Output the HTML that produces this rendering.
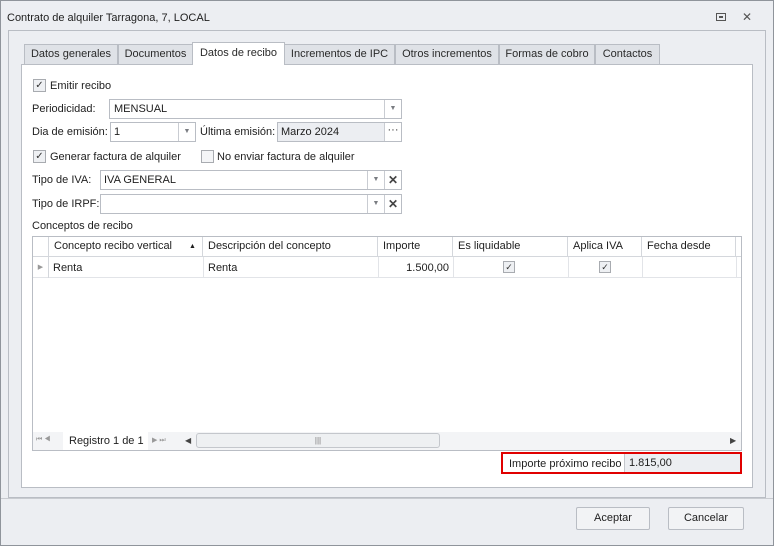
<!DOCTYPE html><html><head><style>
*{box-sizing:border-box;margin:0;padding:0}
body{width:774px;height:546px;background:#eceef2;font-family:"Liberation Sans",sans-serif;font-size:11px;color:#1e1e1e;position:relative;overflow:hidden}
.a{position:absolute}
.box{position:absolute;background:#fff;border:1px solid #b9bdc4}
.ro{background:#eceef2}
.btn{position:absolute;border-left:1px solid #c9ccd2;width:17px;top:0;bottom:0;background:#fff;text-align:center;color:#7a7d82;font-size:7px;line-height:18px}
.tab{position:absolute;top:44px;height:20px;background:#dfe2e7;border:1px solid #b9bdc4;border-bottom:none;line-height:19px;text-align:center;color:#2a2a2a}
.cb{position:absolute;width:13px;height:13px;border:1px solid #a8abb0;background:#eef0f3;font-size:10px;line-height:11px;text-align:center;color:#333}
.gh{position:absolute;top:0;height:20px;border-right:1px solid #d4d7dc;line-height:19px;padding-left:5px;white-space:nowrap}
.lbl{position:absolute;white-space:nowrap}
</style></head><body>
<div class="a" style="left:0;top:0;width:774px;height:546px;border:1px solid #8f949b"></div>
<div class="a" style="left:7px;top:12px">Contrato de alquiler Tarragona, 7, LOCAL</div>
<div class="a" style="left:716px;top:13px;width:10px;height:8px;border:1px solid #555"><div style="margin:2px 2px;height:2px;border:1px solid #555;width:4px"></div></div>
<div class="a" style="left:742px;top:10px;font-size:12px;color:#555">✕</div>
<div class="a" style="left:8px;top:30px;width:758px;height:468px;border:1px solid #b9bdc4"></div>
<div class="tab" style="left:24px;width:94px">Datos generales</div>
<div class="tab" style="left:118px;width:75px">Documentos</div>
<div class="tab" style="left:284px;width:111px">Incrementos de IPC</div>
<div class="tab" style="left:395px;width:104px">Otros incrementos</div>
<div class="tab" style="left:499px;width:96px">Formas de cobro</div>
<div class="tab" style="left:595px;width:65px">Contactos</div>
<div class="a" style="left:21px;top:64px;width:732px;height:424px;background:#fff;border:1px solid #b9bdc4"></div>
<div class="tab" style="left:192px;width:93px;top:42px;height:23px;background:#fff;line-height:21px;z-index:2">Datos de recibo</div>
<div class="cb" style="left:33px;top:79px">✓</div><div class="lbl" style="left:50px;top:80px">Emitir recibo</div>
<div class="lbl" style="left:32px;top:103px">Periodicidad:</div>
<div class="box" style="left:109px;top:99px;width:293px;height:20px"><span class="a" style="left:4px;top:3px">MENSUAL</span><div class="btn" style="right:0">▼</div></div>
<div class="lbl" style="left:32px;top:126px">Dia de emisión:</div>
<div class="box" style="left:110px;top:122px;width:86px;height:20px"><span class="a" style="left:3px;top:3px">1</span><div class="btn" style="right:0">▼</div></div>
<div class="lbl" style="left:200px;top:126px">Última emisión:</div>
<div class="box ro" style="left:277px;top:122px;width:125px;height:20px"><span class="a" style="left:3px;top:3px">Marzo 2024</span><div class="btn" style="right:0;font-size:11px;line-height:14px;color:#333">···</div></div>
<div class="cb" style="left:33px;top:150px">✓</div><div class="lbl" style="left:50px;top:151px">Generar factura de alquiler</div>
<div class="cb" style="left:201px;top:150px;background:#f4f5f7"></div><div class="lbl" style="left:217px;top:151px">No enviar factura de alquiler</div>
<div class="lbl" style="left:32px;top:174px">Tipo de IVA:</div>
<div class="box" style="left:100px;top:170px;width:302px;height:20px"><span class="a" style="left:3px;top:3px">IVA GENERAL</span><div class="btn" style="right:17px">▼</div><div class="btn" style="right:0;font-size:12px;color:#444;font-weight:bold">✕</div></div>
<div class="lbl" style="left:32px;top:198px">Tipo de IRPF:</div>
<div class="box" style="left:100px;top:194px;width:302px;height:20px"><div class="btn" style="right:17px">▼</div><div class="btn" style="right:0;font-size:12px;color:#444;font-weight:bold">✕</div></div>
<div class="lbl" style="left:32px;top:220px">Conceptos de recibo</div>
<div class="box" style="left:32px;top:236px;width:710px;height:215px;overflow:hidden">
 <div class="a" style="left:0;top:0;width:710px;height:20px;border-bottom:1px solid #d4d7dc;background:#fff"></div>
 <div class="gh" style="left:0;width:16px"></div>
 <div class="gh" style="left:16px;width:154px">Concepto recibo vertical<span class="a" style="left:140px;font-size:7px">▲</span></div>
 <div class="gh" style="left:170px;width:175px">Descripción del concepto</div>
 <div class="gh" style="left:345px;width:75px">Importe</div>
 <div class="gh" style="left:420px;width:115px">Es liquidable</div>
 <div class="gh" style="left:535px;width:74px">Aplica IVA</div>
 <div class="gh" style="left:609px;width:94px">Fecha desde</div>
 <div class="a" style="left:0;top:20px;width:710px;height:21px;border-bottom:1px solid #e2e4e8"></div>
 <div class="a" style="left:0;top:20px;width:16px;height:21px;border-right:1px solid #d4d7dc;color:#999;font-size:7px;line-height:21px;text-align:center">▶</div>
 <div class="a" style="left:170px;top:20px;height:21px;border-left:1px solid #e2e4e8"></div>
 <div class="a" style="left:345px;top:20px;height:21px;border-left:1px solid #e2e4e8"></div>
 <div class="a" style="left:420px;top:20px;height:21px;border-left:1px solid #e2e4e8"></div>
 <div class="a" style="left:535px;top:20px;height:21px;border-left:1px solid #e2e4e8"></div>
 <div class="a" style="left:609px;top:20px;height:21px;border-left:1px solid #e2e4e8"></div>
 <div class="a" style="left:703px;top:20px;height:21px;border-left:1px solid #e2e4e8"></div>
 <div class="a" style="left:20px;top:25px">Renta</div>
 <div class="a" style="left:175px;top:25px">Renta</div>
 <div class="a" style="left:345px;top:25px;width:71px;text-align:right">1.500,00</div>
 <div class="cb" style="left:470px;top:24px;width:12px;height:12px;font-size:9px">✓</div>
 <div class="cb" style="left:566px;top:24px;width:12px;height:12px;font-size:9px">✓</div>
 <div class="a" style="left:0;top:195px;width:710px;height:19px;background:#f3f4f6"></div>
 <div class="a" style="left:3px;top:199px;font-size:7px;color:#999">⏮ ◀</div>
 <div class="a" style="left:30px;top:195px;width:85px;height:19px;background:#fff;line-height:19px;padding-left:6px;white-space:nowrap">Registro 1 de 1</div>
 <div class="a" style="left:119px;top:199px;font-size:7px;color:#999">▶ ⏭</div>
 <div class="a" style="left:152px;top:199px;font-size:8px;color:#444">◀</div>
 <div class="a" style="left:163px;top:196px;width:244px;height:15px;border:1px solid #c4c7cc;border-radius:3px;background:#eef0f2;text-align:center;font-size:8px;line-height:13px;color:#777">|||</div>
 <div class="a" style="left:697px;top:199px;font-size:8px;color:#444">▶</div>
</div>
<div class="a" style="left:501px;top:452px;width:241px;height:22px;border:2px solid #e00000;background:#fff"></div>
<div class="a" style="left:509px;top:458px;white-space:nowrap">Importe próximo recibo</div>
<div class="a" style="left:624px;top:454px;width:116px;height:18px;background:#eceef2;border-left:1px solid #c4c7cc;padding:3px 4px">1.815,00</div>
<div class="a" style="left:1px;top:498px;width:772px;height:1px;background:#c8cbd0"></div>
<div class="a" style="left:576px;top:507px;width:74px;height:23px;border:1px solid #b9bdc4;border-radius:2px;background:#f2f3f5;text-align:center;line-height:21px">Aceptar</div>
<div class="a" style="left:668px;top:507px;width:76px;height:23px;border:1px solid #b9bdc4;border-radius:2px;background:#f2f3f5;text-align:center;line-height:21px">Cancelar</div>
</body></html>
